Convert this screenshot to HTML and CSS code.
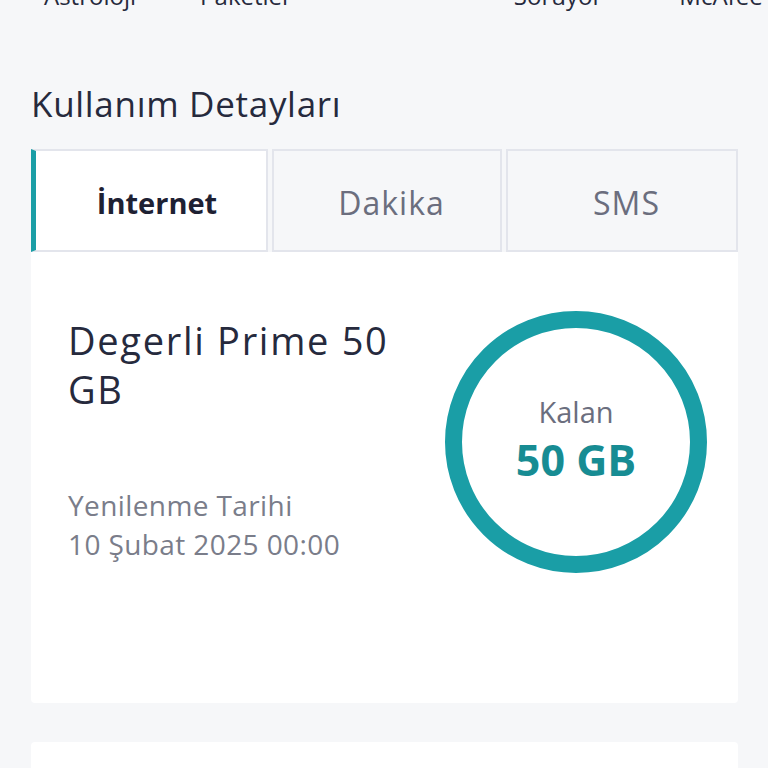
FILE: index.html
```html
<!DOCTYPE html>
<html lang="tr">
<head>
<meta charset="utf-8">
<link rel="stylesheet" href="styles.css">
</head>
<body>
<div class="shortcuts">
  <div class="sc">Astroloji</div>
  <div class="sc">Paketler</div>
  <div class="sc"></div>
  <div class="sc">Soruyor</div>
  <div class="sc">- McAfee</div>
</div>
<main class="page">
  <h2 class="section-title">Kullanım Detayları</h2>
  <div class="tabs">
    <div class="tab active">İnternet</div>
    <div class="tab">Dakika</div>
    <div class="tab">SMS</div>
  </div>
  <section class="card">
    <div class="info">
      <div class="pkg">Degerli Prime 50 GB</div>
      <div class="renew">
        <div>Yenilenme Tarihi</div>
        <div>10 Şubat 2025 00:00</div>
      </div>
    </div>
    <div class="ring">
      <div class="ring-label">Kalan</div>
      <div class="ring-value">50 GB</div>
    </div>
  </section>
  <section class="card next"></section>
</main>
</body>
</html>
```
FILE: styles.css
```css
* { box-sizing: border-box; }
html, body { margin: 0; padding: 0; }
body {
  background: #f6f7f9;
  font-family: "Open Sans", "Noto Sans", sans-serif;
  color: #262a3d;
  width: 768px;
  height: 768px;
  overflow: hidden;
}
.shortcuts {
  display: grid;
  grid-template-columns: repeat(5, 156px);
  padding-left: 12px;
  margin-top: -18px;
  height: 33px;
  font-size: 24px;
  line-height: 28px;
  color: #262a3d;
}
.sc { text-align: center; white-space: nowrap; }
.page { padding: 0 30px 0 31px; }
.section-title {
  margin: 67px 0 0;
  font-size: 35px;
  font-weight: 400;
  line-height: 44px;
  letter-spacing: 0.7px;
  color: #262a3d;
}
.tabs {
  display: flex;
  gap: 4px;
  margin-top: 23px;
  height: 103px;
  background: #f6f7f9;
}
.tab {
  display: flex;
  align-items: center;
  justify-content: center;
  padding-top: 3px;
  padding-left: 9px;
  background: #f6f7f9;
  border: 2px solid #e3e5ec;
  font-size: 32px;
  letter-spacing: 1px;
  color: #6b6e7e;
}
.tab:nth-child(1) { width: 237px; }
.tab:nth-child(2) { width: 230px; }
.tab:nth-child(3) { width: 232px; }
.tab.active {
  background: #fff;
  border-left: 5px solid #1a9ea6;
  border-top: 2px solid #e3e5ec;
  padding-left: 12px;
  color: #1e2133;
  font-weight: 700;
  font-size: 29px;
  letter-spacing: 0;
}
.card {
  background: #fff;
  height: 451px;
  display: flex;
  justify-content: space-between;
  padding: 59px 31px 0 37px;
  border-radius: 0 0 4px 4px;
}
.info { width: 345px; }
.pkg {
  font-size: 38px;
  line-height: 49px;
  letter-spacing: 1.7px;
  color: #262a3d;
  margin-top: 5px;
}
.renew {
  margin-top: 72px;
  font-size: 28px;
  line-height: 39px;
  letter-spacing: 0.4px;
  color: #7a7d8a;
}
.ring {
  width: 262px;
  height: 262px;
  border-radius: 50%;
  border: 17px solid #1a9ea6;
  display: flex;
  flex-direction: column;
  align-items: center;
  justify-content: center;
  flex-shrink: 0;
}
.ring-label {
  font-size: 29px;
  line-height: 34px;
  color: #6b6e7e;
  margin-top: -6px;
}
.ring-value {
  font-size: 43px;
  line-height: 48px;
  font-weight: 700;
  color: #178c93;
  margin-top: 7px;
}
.card.next {
  margin-top: 39px;
  height: 60px;
  border-radius: 4px;
}
```
